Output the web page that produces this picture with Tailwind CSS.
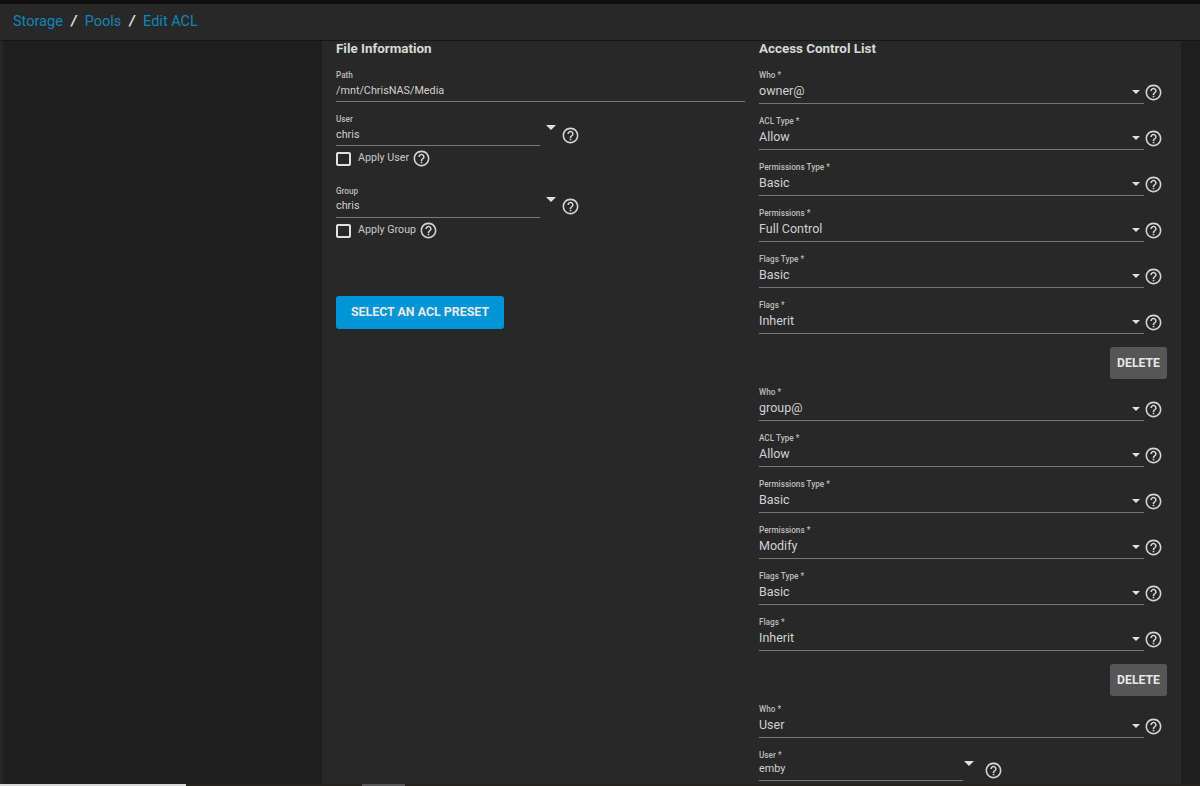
<!DOCTYPE html>
<html lang="en">
<head>
  <meta charset="UTF-8" />
  <title>Edit ACL</title>
  <script src="https://cdn.jsdelivr.net/npm/@tailwindcss/browser@4"></script>
</head>
<body class="h-[786px] overflow-hidden bg-[#1e1e1e] font-['Roboto',sans-serif] text-[#d4d4d4]">
  <svg class="hidden"><symbol id="help" viewBox="0 0 24 24"><path fill="currentColor" d="M11 18h2v-2h-2v2zm1-16C6.48 2 2 6.48 2 12s4.48 10 10 10 10-4.48 10-10S17.52 2 12 2zm0 18c-4.41 0-8-3.59-8-8s3.59-8 8-8 8 3.59 8 8-3.59 8-8 8zm0-14c-2.21 0-4 1.79-4 4h2c0-1.1.9-2 2-2s2 .9 2 2c0 2-3 1.75-3 5h2c0-2.25 3-2.5 3-5 0-2.21-1.79-4-4-4z"/></symbol></svg>
  <div class="flex h-full flex-col">
    <div class="h-1 shrink-0 bg-[#0e0e0e]"></div>

    <!-- breadcrumb -->
    <div class="flex h-[37px] shrink-0 items-center gap-[7.3px] border-b border-[#161616] bg-[#282828] pl-[13px] text-[14.5px] text-[#0f86b8]">
      <span>Storage</span><span class="px-[1px] font-bold text-[#e0e0e0] italic">/</span>
      <span>Pools</span><span class="px-[1px] font-bold text-[#e0e0e0] italic">/</span>
      <span>Edit ACL</span>
    </div>

    <div class="flex min-h-0 flex-1">
      <div class="w-[3px] shrink-0 bg-[#262626]"></div>
      <div class="w-[319px] shrink-0"></div>

      <!-- form card -->
      <div class="flex w-[859px] shrink-0 bg-[#282828] pl-[14px]">
        <!-- file information -->
        <div class="w-[409px] shrink-0">
          <h3 class="text-[13.4px] leading-[16px] font-bold text-[#d8d8d8]">File Information</h3>
          <div class="mt-[12px] border-b border-[#777] pb-[2px]">
            <div class="text-[8.2px] leading-[12px] font-medium text-[#bdbdbd]">Path</div>
            <div class="pt-[2px] text-[10.8px] leading-[16px] text-[#d0d0d0]">/mnt/ChrisNAS/Media</div>
          </div>

          <div class="mt-[11px] flex">
            <div class="w-[204px] border-b border-[#777] pb-[2px]">
              <div class="text-[8.2px] leading-[12px] font-medium text-[#bdbdbd]">User</div>
              <div class="pt-[2px] text-[10.8px] leading-[16px] text-[#d0d0d0]">chris</div>
            </div>
            <span class="mt-[12px] ml-[6px] h-0 w-0 border-x-[5px] border-t-[5px] border-x-transparent border-t-[#e0e0e0]"></span>
            <svg class="mt-[13px] ml-[5px] h-[19px] w-[19px]"><use href="#help" /></svg>
          </div>
          <div class="mt-[3px] flex items-center">
            <span class="h-[14px] w-[15px] rounded-[2px] border-2 border-[#e0e0e0]"></span>
            <span class="ml-[7px] text-[10.7px] text-[#c8c8c8]">Apply User</span>
            <svg class="ml-[3px] h-[19px] w-[19px]"><use href="#help" /></svg>
          </div>

          <div class="mt-[17px] flex">
            <div class="w-[204px] border-b border-[#777] pb-[3px]">
              <div class="text-[8.2px] leading-[12px] font-medium text-[#bdbdbd]">Group</div>
              <div class="pt-[1px] text-[10.8px] leading-[16px] text-[#d0d0d0]">chris</div>
            </div>
            <span class="mt-[12px] ml-[6px] h-0 w-0 border-x-[5px] border-t-[5px] border-x-transparent border-t-[#e0e0e0]"></span>
            <svg class="mt-[12px] ml-[5px] h-[19px] w-[19px]"><use href="#help" /></svg>
          </div>
          <div class="mt-[3px] flex items-center">
            <span class="h-[14px] w-[15px] rounded-[2px] border-2 border-[#e0e0e0]"></span>
            <span class="ml-[7px] text-[10.7px] text-[#c8c8c8]">Apply Group</span>
            <svg class="ml-[3px] h-[19px] w-[19px]"><use href="#help" /></svg>
          </div>

          <button class="mt-[56px] h-[33px] w-[168px] rounded-[3px] bg-[#0095d5] text-[12.4px] font-bold text-[#e8e8e8]">SELECT AN ACL PRESET</button>
        </div>

        <!-- access control list -->
        <div class="ml-[14px] w-[408px] shrink-0" id="acl">
          <h3 class="text-[13.4px] leading-[16px] font-bold text-[#d8d8d8]">Access Control List</h3>
          <div class="h-[12px]"></div>

          <div class="flex h-[46px]"><div class="h-[35px] w-[385px] border-b border-[#777]"><div class="text-[8.2px] leading-[12px] font-medium text-[#bdbdbd]">Who *</div><div class="flex justify-between pt-[1px] text-[12.5px] leading-[18px] text-[#d0d0d0]"><span>owner@</span><span class="mt-[8px] mr-[4px] h-0 w-0 border-x-[4.5px] border-t-[4.5px] border-x-transparent border-t-[#e0e0e0]"></span></div></div><svg class="mt-[14px] h-[19px] w-[19px]"><use href="#help" /></svg></div>
          <div class="flex h-[46px]"><div class="h-[35px] w-[385px] border-b border-[#777]"><div class="text-[8.2px] leading-[12px] font-medium text-[#bdbdbd]">ACL Type *</div><div class="flex justify-between pt-[1px] text-[12.5px] leading-[18px] text-[#d0d0d0]"><span>Allow</span><span class="mt-[8px] mr-[4px] h-0 w-0 border-x-[4.5px] border-t-[4.5px] border-x-transparent border-t-[#e0e0e0]"></span></div></div><svg class="mt-[14px] h-[19px] w-[19px]"><use href="#help" /></svg></div>
          <div class="flex h-[46px]"><div class="h-[35px] w-[385px] border-b border-[#777]"><div class="text-[8.2px] leading-[12px] font-medium text-[#bdbdbd]">Permissions Type *</div><div class="flex justify-between pt-[1px] text-[12.5px] leading-[18px] text-[#d0d0d0]"><span>Basic</span><span class="mt-[8px] mr-[4px] h-0 w-0 border-x-[4.5px] border-t-[4.5px] border-x-transparent border-t-[#e0e0e0]"></span></div></div><svg class="mt-[14px] h-[19px] w-[19px]"><use href="#help" /></svg></div>
          <div class="flex h-[46px]"><div class="h-[35px] w-[385px] border-b border-[#777]"><div class="text-[8.2px] leading-[12px] font-medium text-[#bdbdbd]">Permissions *</div><div class="flex justify-between pt-[1px] text-[12.5px] leading-[18px] text-[#d0d0d0]"><span>Full Control</span><span class="mt-[8px] mr-[4px] h-0 w-0 border-x-[4.5px] border-t-[4.5px] border-x-transparent border-t-[#e0e0e0]"></span></div></div><svg class="mt-[14px] h-[19px] w-[19px]"><use href="#help" /></svg></div>
          <div class="flex h-[46px]"><div class="h-[35px] w-[385px] border-b border-[#777]"><div class="text-[8.2px] leading-[12px] font-medium text-[#bdbdbd]">Flags Type *</div><div class="flex justify-between pt-[1px] text-[12.5px] leading-[18px] text-[#d0d0d0]"><span>Basic</span><span class="mt-[8px] mr-[4px] h-0 w-0 border-x-[4.5px] border-t-[4.5px] border-x-transparent border-t-[#e0e0e0]"></span></div></div><svg class="mt-[14px] h-[19px] w-[19px]"><use href="#help" /></svg></div>
          <div class="flex h-[46px]"><div class="h-[35px] w-[385px] border-b border-[#777]"><div class="text-[8.2px] leading-[12px] font-medium text-[#bdbdbd]">Flags *</div><div class="flex justify-between pt-[1px] text-[12.5px] leading-[18px] text-[#d0d0d0]"><span>Inherit</span><span class="mt-[8px] mr-[4px] h-0 w-0 border-x-[4.5px] border-t-[4.5px] border-x-transparent border-t-[#e0e0e0]"></span></div></div><svg class="mt-[14px] h-[19px] w-[19px]"><use href="#help" /></svg></div>

          <div class="flex h-[41px] items-start pt-[2px]"><button class="ml-[351px] h-[32px] w-[57px] rounded-[3px] bg-[#565656] text-[12.2px] font-bold text-[#e8e8e8]">DELETE</button></div>

          <div class="flex h-[46px]"><div class="h-[35px] w-[385px] border-b border-[#777]"><div class="text-[8.2px] leading-[12px] font-medium text-[#bdbdbd]">Who *</div><div class="flex justify-between pt-[1px] text-[12.5px] leading-[18px] text-[#d0d0d0]"><span>group@</span><span class="mt-[8px] mr-[4px] h-0 w-0 border-x-[4.5px] border-t-[4.5px] border-x-transparent border-t-[#e0e0e0]"></span></div></div><svg class="mt-[14px] h-[19px] w-[19px]"><use href="#help" /></svg></div>
          <div class="flex h-[46px]"><div class="h-[35px] w-[385px] border-b border-[#777]"><div class="text-[8.2px] leading-[12px] font-medium text-[#bdbdbd]">ACL Type *</div><div class="flex justify-between pt-[1px] text-[12.5px] leading-[18px] text-[#d0d0d0]"><span>Allow</span><span class="mt-[8px] mr-[4px] h-0 w-0 border-x-[4.5px] border-t-[4.5px] border-x-transparent border-t-[#e0e0e0]"></span></div></div><svg class="mt-[14px] h-[19px] w-[19px]"><use href="#help" /></svg></div>
          <div class="flex h-[46px]"><div class="h-[35px] w-[385px] border-b border-[#777]"><div class="text-[8.2px] leading-[12px] font-medium text-[#bdbdbd]">Permissions Type *</div><div class="flex justify-between pt-[1px] text-[12.5px] leading-[18px] text-[#d0d0d0]"><span>Basic</span><span class="mt-[8px] mr-[4px] h-0 w-0 border-x-[4.5px] border-t-[4.5px] border-x-transparent border-t-[#e0e0e0]"></span></div></div><svg class="mt-[14px] h-[19px] w-[19px]"><use href="#help" /></svg></div>
          <div class="flex h-[46px]"><div class="h-[35px] w-[385px] border-b border-[#777]"><div class="text-[8.2px] leading-[12px] font-medium text-[#bdbdbd]">Permissions *</div><div class="flex justify-between pt-[1px] text-[12.5px] leading-[18px] text-[#d0d0d0]"><span>Modify</span><span class="mt-[8px] mr-[4px] h-0 w-0 border-x-[4.5px] border-t-[4.5px] border-x-transparent border-t-[#e0e0e0]"></span></div></div><svg class="mt-[14px] h-[19px] w-[19px]"><use href="#help" /></svg></div>
          <div class="flex h-[46px]"><div class="h-[35px] w-[385px] border-b border-[#777]"><div class="text-[8.2px] leading-[12px] font-medium text-[#bdbdbd]">Flags Type *</div><div class="flex justify-between pt-[1px] text-[12.5px] leading-[18px] text-[#d0d0d0]"><span>Basic</span><span class="mt-[8px] mr-[4px] h-0 w-0 border-x-[4.5px] border-t-[4.5px] border-x-transparent border-t-[#e0e0e0]"></span></div></div><svg class="mt-[14px] h-[19px] w-[19px]"><use href="#help" /></svg></div>
          <div class="flex h-[46px]"><div class="h-[35px] w-[385px] border-b border-[#777]"><div class="text-[8.2px] leading-[12px] font-medium text-[#bdbdbd]">Flags *</div><div class="flex justify-between pt-[1px] text-[12.5px] leading-[18px] text-[#d0d0d0]"><span>Inherit</span><span class="mt-[8px] mr-[4px] h-0 w-0 border-x-[4.5px] border-t-[4.5px] border-x-transparent border-t-[#e0e0e0]"></span></div></div><svg class="mt-[14px] h-[19px] w-[19px]"><use href="#help" /></svg></div>

          <div class="flex h-[41px] items-start pt-[2px]"><button class="ml-[351px] h-[32px] w-[57px] rounded-[3px] bg-[#565656] text-[12.2px] font-bold text-[#e8e8e8]">DELETE</button></div>

          <div class="flex h-[46px]"><div class="h-[35px] w-[385px] border-b border-[#777]"><div class="text-[8.2px] leading-[12px] font-medium text-[#bdbdbd]">Who *</div><div class="flex justify-between pt-[1px] text-[12.5px] leading-[18px] text-[#d0d0d0]"><span>User</span><span class="mt-[8px] mr-[4px] h-0 w-0 border-x-[4.5px] border-t-[4.5px] border-x-transparent border-t-[#e0e0e0]"></span></div></div><svg class="mt-[14px] h-[19px] w-[19px]"><use href="#help" /></svg></div>
          <div class="flex">
            <div class="w-[204px] border-b border-[#777] pb-[3px]">
              <div class="text-[8.2px] leading-[12px] font-medium text-[#bdbdbd]">User *</div>
              <div class="text-[10.8px] leading-[16px] text-[#d0d0d0]">emby</div>
            </div>
            <span class="mt-[12px] ml-[1px] h-0 w-0 border-x-[5px] border-t-[5px] border-x-transparent border-t-[#e0e0e0]"></span>
            <svg class="mt-[12px] ml-[10px] h-[19px] w-[19px]"><use href="#help" /></svg>
          </div>
        </div>
      </div>
    </div>

    <!-- window edge at the bottom -->
    <div class="flex h-[2px] shrink-0 bg-[#24241c]">
      <div class="w-[186px] bg-[#d8d8d8]"></div>
      <div class="ml-[176px] w-[43px] bg-[#555]"></div>
    </div>
  </div>
</body>
</html>
